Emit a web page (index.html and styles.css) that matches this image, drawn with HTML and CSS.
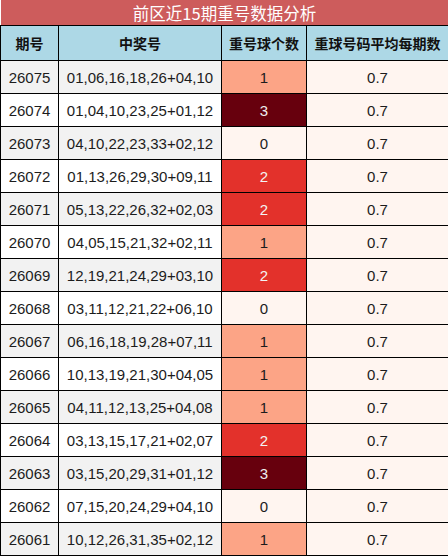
FILE: index.html
```html
<!DOCTYPE html>
<html lang="zh">

<head>
	<meta charset="UTF-8">
	<title>前区近15期重号数据分析</title>
	<link rel="stylesheet" href="styles.css">
</head>

<body>
	<table class="stats">
		<colgroup>
			<col class="c-issue">
			<col class="c-nums">
			<col class="c-repeat">
			<col class="c-avg">
		</colgroup>
		<thead>
			<tr>
				<th colspan="4" class="title">前区近15期重号数据分析</th>
			</tr>
			<tr class="head">
				<th>期号</th>
				<th>中奖号</th>
				<th>重号球个数</th>
				<th>重球号码平均每期数</th>
			</tr>
		</thead>
		<tbody>
			<tr><td>26075</td><td>01,06,16,18,26+04,10</td><td class="r1">1</td><td class="avg">0.7</td></tr>
			<tr><td>26074</td><td>01,04,10,23,25+01,12</td><td class="r3">3</td><td class="avg">0.7</td></tr>
			<tr><td>26073</td><td>04,10,22,23,33+02,12</td><td class="r0">0</td><td class="avg">0.7</td></tr>
			<tr><td>26072</td><td>01,13,26,29,30+09,11</td><td class="r2">2</td><td class="avg">0.7</td></tr>
			<tr><td>26071</td><td>05,13,22,26,32+02,03</td><td class="r2">2</td><td class="avg">0.7</td></tr>
			<tr><td>26070</td><td>04,05,15,21,32+02,11</td><td class="r1">1</td><td class="avg">0.7</td></tr>
			<tr><td>26069</td><td>12,19,21,24,29+03,10</td><td class="r2">2</td><td class="avg">0.7</td></tr>
			<tr><td>26068</td><td>03,11,12,21,22+06,10</td><td class="r0">0</td><td class="avg">0.7</td></tr>
			<tr><td>26067</td><td>06,16,18,19,28+07,11</td><td class="r1">1</td><td class="avg">0.7</td></tr>
			<tr><td>26066</td><td>10,13,19,21,30+04,05</td><td class="r1">1</td><td class="avg">0.7</td></tr>
			<tr><td>26065</td><td>04,11,12,13,25+04,08</td><td class="r1">1</td><td class="avg">0.7</td></tr>
			<tr><td>26064</td><td>03,13,15,17,21+02,07</td><td class="r2">2</td><td class="avg">0.7</td></tr>
			<tr><td>26063</td><td>03,15,20,29,31+01,12</td><td class="r3">3</td><td class="avg">0.7</td></tr>
			<tr><td>26062</td><td>07,15,20,24,29+04,10</td><td class="r0">0</td><td class="avg">0.7</td></tr>
			<tr><td>26061</td><td>10,12,26,31,35+02,12</td><td class="r1">1</td><td class="avg">0.7</td></tr>
		</tbody>
	</table>
</body>

</html>
```

FILE: styles.css
```css
body {
	margin: 0;
	background: #fff;
	font-family: "Liberation Sans", "Noto Sans CJK SC", sans-serif;
}

.stats {
	width: 448px;
	border-collapse: collapse;
	table-layout: fixed;
	color: #1c1c1c;
}

.c-issue {
	width: 58px;
}

.c-nums {
	width: 163px;
}

.c-repeat {
	width: 85px;
}

.c-avg {
	width: 142px;
}

.stats th,
.stats td {
	border: 1px solid #000;
	padding: 0;
	text-align: center;
}

.stats .title {
	height: 25px;
	background: #cd5c5c;
	color: #fff;
	font-family: "Noto Sans CJK SC", sans-serif;
	font-size: 16.5px;
	font-weight: normal;
	border-top: none;
	border-left: none;
	border-right: none;
}

.head th {
	height: 34px;
	background: #add8e6;
	color: #111;
	font-family: "Noto Sans CJK SC", sans-serif;
	font-size: 14px;
	font-weight: bold;
}

.stats td {
	height: 32px;
	font-size: 15px;
}

/* 行条纹 */
.stats tbody tr:nth-child(odd) {
	background: #f2f2f2;
}

.stats tbody tr:nth-child(even) {
	background: #fff;
}

.stats td.avg,
.stats td.r0 {
	background: #fff5f0;
}

.stats td.r1 {
	background: #fca486;
}

.stats td.r2 {
	background: #e3312b;
	color: #f4f4f4;
}

.stats td.r3 {
	background: #67000d;
	color: #eee;
}
```
